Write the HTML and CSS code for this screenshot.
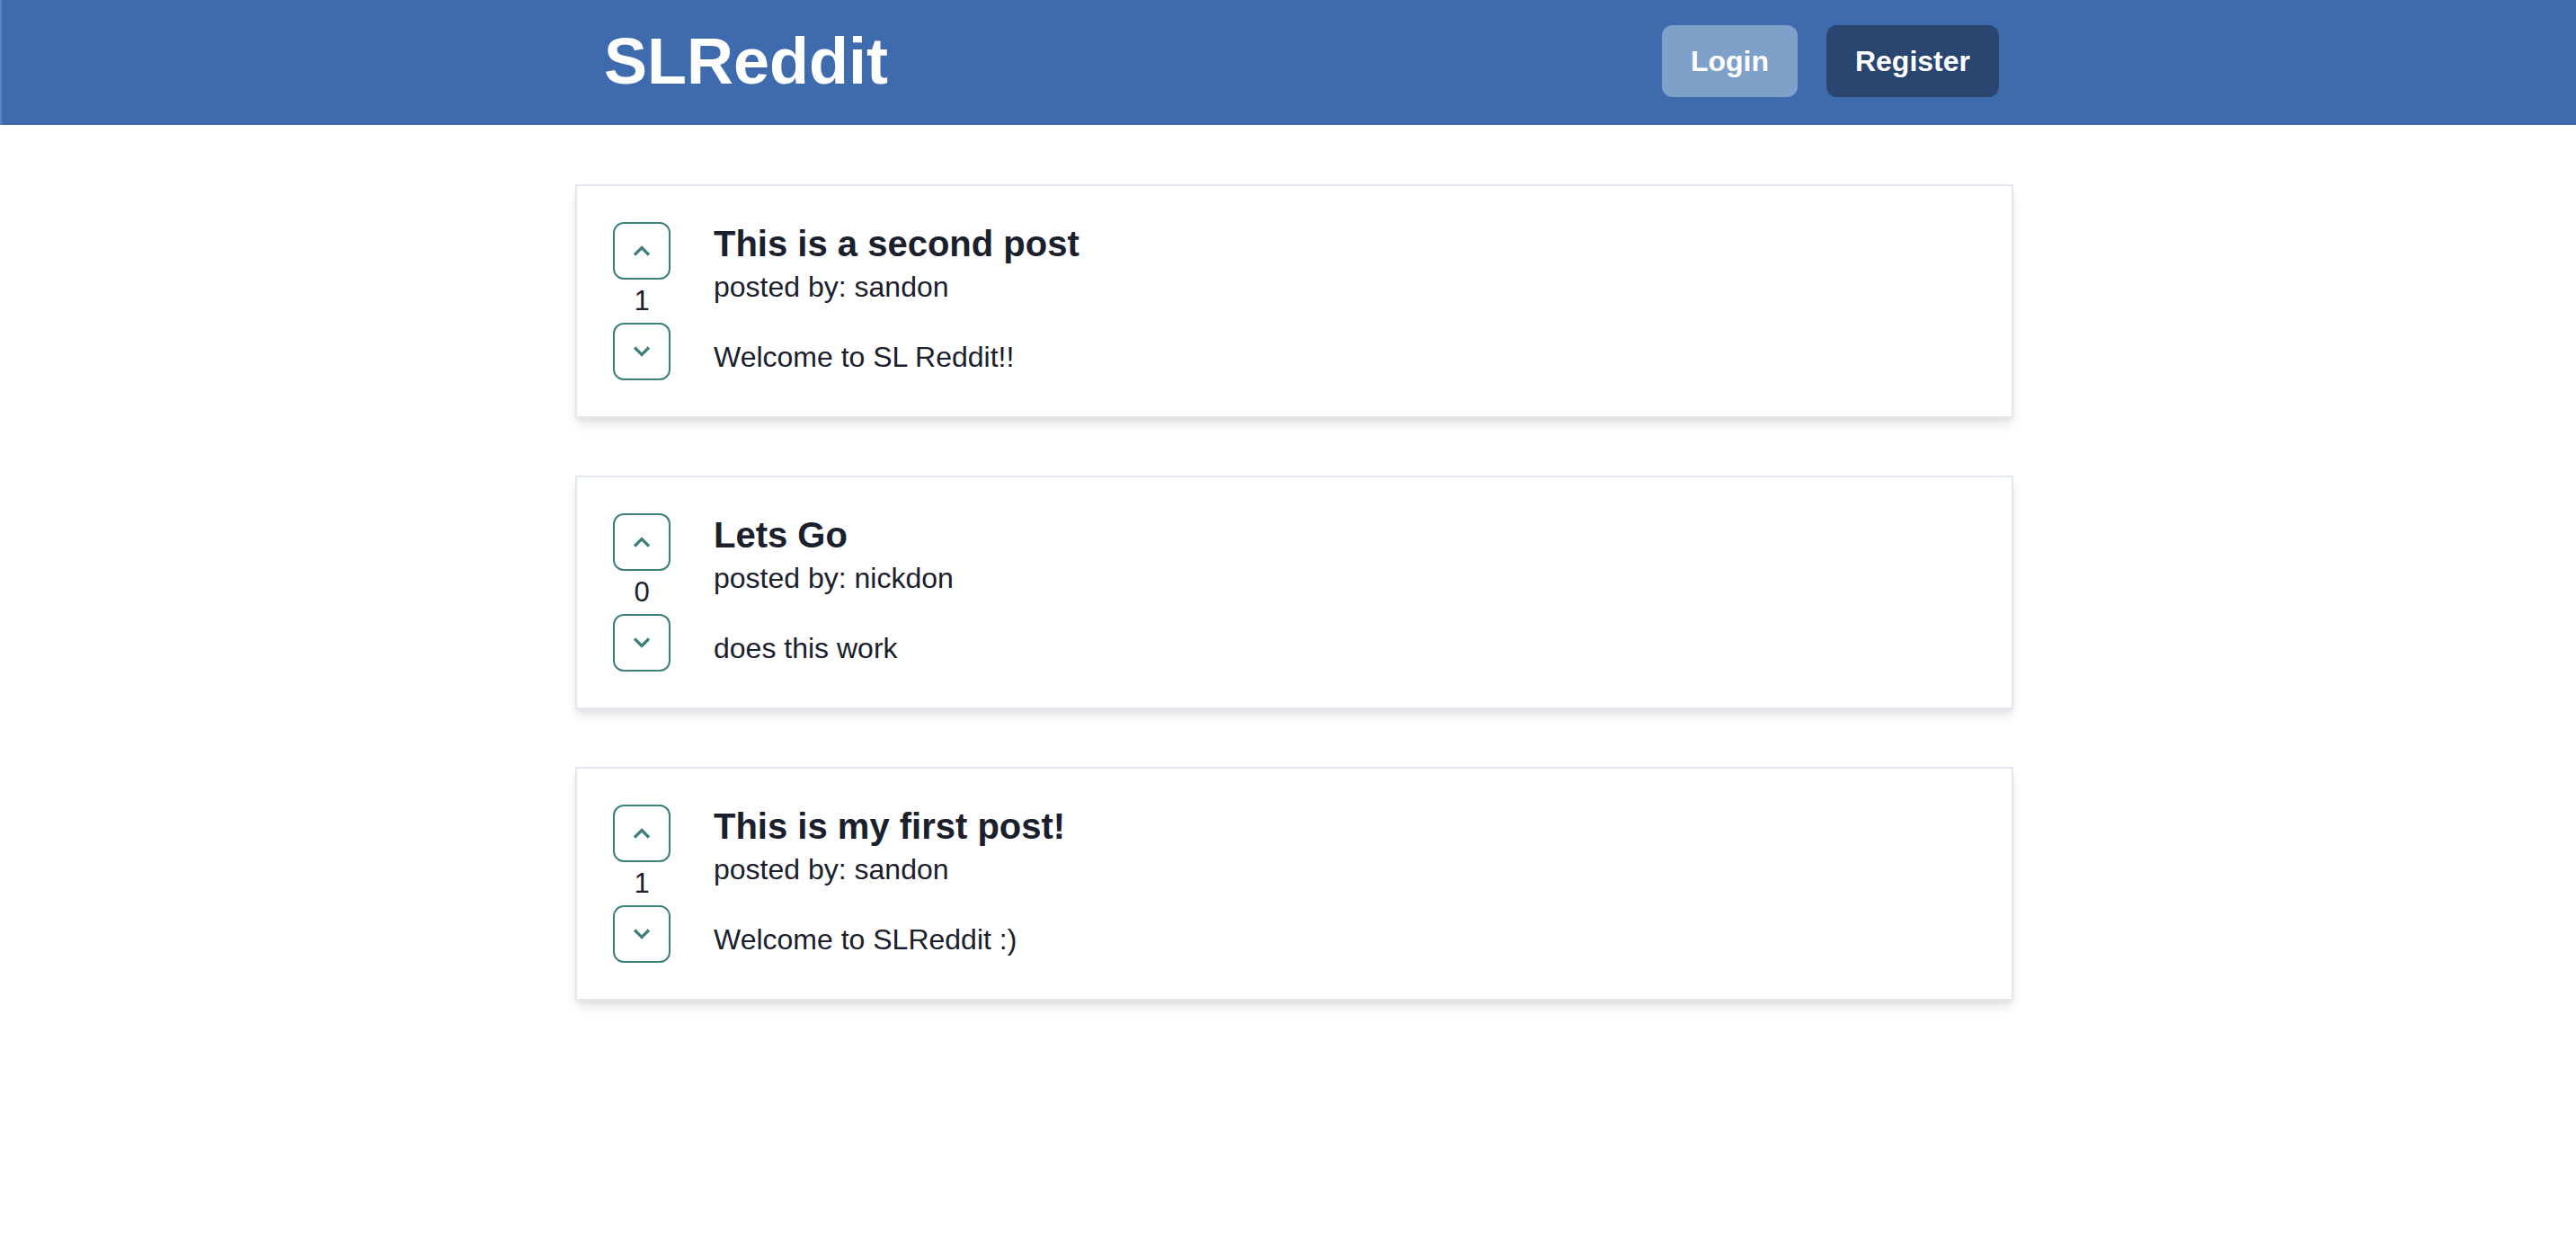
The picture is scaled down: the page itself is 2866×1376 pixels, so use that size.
FILE: index.html
```html
<!DOCTYPE html>
<html lang="en">
<head>
<meta charset="utf-8">
<title>SLReddit</title>
<link rel="stylesheet" href="styles.css">
</head>
<body>
<header class="topbar">
  <div class="container bar-inner">
    <h1 class="logo">SLReddit</h1>
    <nav class="actions">
      <button class="btn btn-login">Login</button>
      <button class="btn btn-register">Register</button>
    </nav>
  </div>
</header>
<main class="container feed">
  <article class="post">
    <div class="votes">
      <button class="vote-btn" aria-label="upvote"><svg viewBox="0 0 20 12" class="chev"><polyline points="2,10.5 10,2.5 18,10.5"/></svg></button>
      <span class="count">1</span>
      <button class="vote-btn" aria-label="downvote"><svg viewBox="0 0 20 12" class="chev"><polyline points="2,1.5 10,9.5 18,1.5"/></svg></button>
    </div>
    <div class="post-body">
      <h2 class="post-title">This is a second post</h2>
      <p class="author">posted by: sandon</p>
      <p class="content">Welcome to SL Reddit!!</p>
    </div>
  </article>
  <article class="post">
    <div class="votes">
      <button class="vote-btn" aria-label="upvote"><svg viewBox="0 0 20 12" class="chev"><polyline points="2,10.5 10,2.5 18,10.5"/></svg></button>
      <span class="count">0</span>
      <button class="vote-btn" aria-label="downvote"><svg viewBox="0 0 20 12" class="chev"><polyline points="2,1.5 10,9.5 18,1.5"/></svg></button>
    </div>
    <div class="post-body">
      <h2 class="post-title">Lets Go</h2>
      <p class="author">posted by: nickdon</p>
      <p class="content">does this work</p>
    </div>
  </article>
  <article class="post">
    <div class="votes">
      <button class="vote-btn" aria-label="upvote"><svg viewBox="0 0 20 12" class="chev"><polyline points="2,10.5 10,2.5 18,10.5"/></svg></button>
      <span class="count">1</span>
      <button class="vote-btn" aria-label="downvote"><svg viewBox="0 0 20 12" class="chev"><polyline points="2,1.5 10,9.5 18,1.5"/></svg></button>
    </div>
    <div class="post-body">
      <h2 class="post-title">This is my first post!</h2>
      <p class="author">posted by: sandon</p>
      <p class="content">Welcome to SLReddit :)</p>
    </div>
  </article>
</main>
</body>
</html>
```
FILE: styles.css
```css
* { box-sizing: border-box; }
html, body { margin: 0; padding: 0; background: #ffffff; }
body {
  font-family: "Liberation Sans", Arial, Helvetica, sans-serif;
  color: #1a202c;
  padding-left: 14px;
  padding-bottom: 40px;
}
.container {
  width: 1600px;
  margin: 0 auto;
}
.topbar {
  margin-left: -14px;
  padding-left: 14px;
  height: 139px;
  background: #3e6bad;
  box-shadow: inset 2px 0 0 #5b82ba;
}
.bar-inner {
  height: 100%;
  display: flex;
  align-items: center;
  justify-content: space-between;
  padding: 0 16px 3px 32px;
}
.logo {
  margin: 0;
  font-size: 72px;
  font-weight: 700;
  line-height: 1.2;
  color: #ffffff;
}
.actions {
  display: flex;
  gap: 32px;
  align-items: center;
}
.btn {
  height: 80px;
  padding: 0 32px;
  border: 0;
  border-radius: 12px;
  font-family: inherit;
  font-size: 32px;
  font-weight: 700;
  color: #ffffff;
  cursor: pointer;
}
.btn-login { background: #7fa0c9; }
.btn-register { background: #28466f; }

.feed {
  padding-top: 66px;
  display: flex;
  flex-direction: column;
  gap: 64px;
}
.post {
  display: flex;
  gap: 48px;
  padding: 40px;
  border: 2px solid #e2e8f0;
  background: #ffffff;
  box-shadow: 0 8px 12px -2px rgba(0,0,0,0.10), 0 4px 8px -2px rgba(0,0,0,0.06);
}
.votes {
  width: 64px;
  display: flex;
  flex-direction: column;
  align-items: center;
}
.vote-btn {
  width: 64px;
  height: 64px;
  padding: 0;
  border: 2px solid #3d7f7b;
  border-radius: 12px;
  background: transparent;
  display: flex;
  align-items: center;
  justify-content: center;
  cursor: pointer;
}
.chev {
  width: 20px;
  height: 12px;
  fill: none;
  stroke: #3d7f7b;
  stroke-width: 3.2;
  stroke-linecap: butt;
  stroke-linejoin: miter;
}
.count {
  font-size: 31px;
  line-height: 48px;
  height: 48px;
}
.post-body { flex: 1; }
.post-title {
  margin: 0;
  font-size: 40px;
  font-weight: 700;
  line-height: 48px;
}
.author {
  margin: 0;
  font-size: 32px;
  line-height: 48px;
}
.content {
  margin: 30px 0 0;
  font-size: 32px;
  line-height: 48px;
}
```
